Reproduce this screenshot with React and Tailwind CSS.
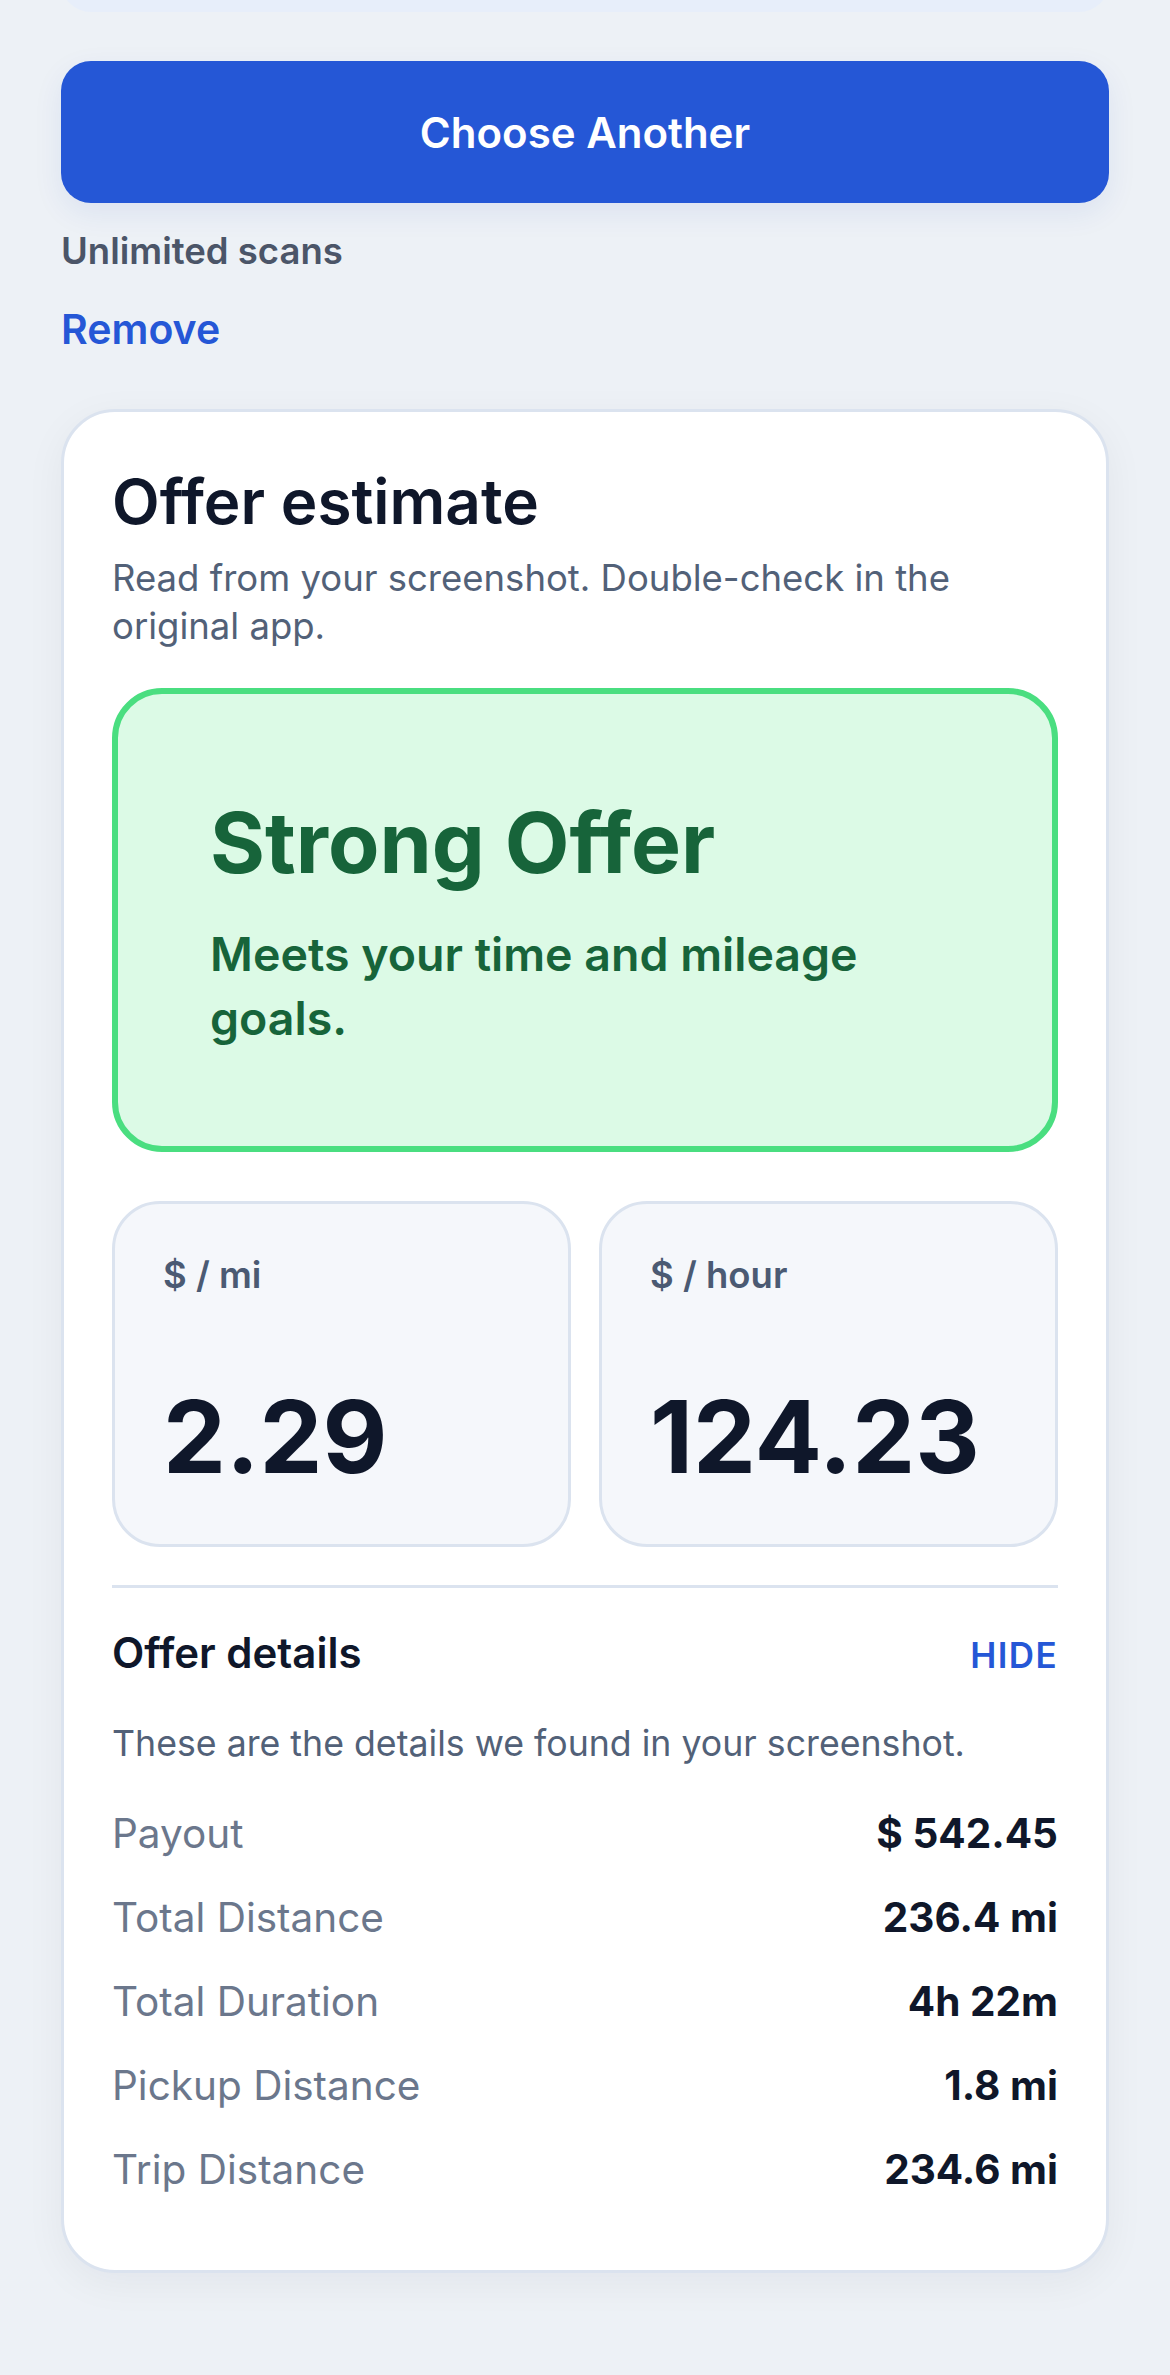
const details = [
  { label: "Payout", value: "$ 542.45" },
  { label: "Total Distance", value: "236.4 mi" },
  { label: "Total Duration", value: "4h 22m" },
  { label: "Pickup Distance", value: "1.8 mi" },
  { label: "Trip Distance", value: "234.6 mi" },
];

const MetricCard = ({ label, value }) => {
  return (
    <div className="flex flex-col h-[346px] px-[48px] pt-[48px] bg-[#f5f7fb] border-[3px] border-[#dbe3ef] rounded-[48px]">
      <span className="font-semibold text-[#4b5a73] text-[36.5px] leading-[47px]">
        {label}
      </span>
      <span className="mt-[88px] font-bold text-[#0f172a] text-[100px] leading-[100px]">
        {value}
      </span>
    </div>
  );
};

const App = () => {
  return (
    <div className="bg-[#edf1f6] px-[61px] pb-[103px] min-h-screen overflow-hidden font-['Inter',sans-serif]">
      <div className="bg-[#e7eefa] -mt-[48px] rounded-[42px] h-[60px]" />

      <button
        type="button"
        className="flex justify-center items-center bg-[#2557d6] shadow-[0_10px_30px_rgba(30,64,175,0.08)] mt-[49px] rounded-[30px] w-full h-[142px] font-semibold text-[42px] text-white"
      >
        Choose Another
      </button>

      <p className="mt-[25px] font-semibold text-[#4b5568] text-[36.5px] leading-[47px]">
        Unlimited scans
      </p>
      <p className="mt-[27px] font-semibold text-[#2557d6] text-[41px] leading-[55px]">
        Remove
      </p>

      <div className="bg-white shadow-[0_10px_40px_rgba(15,23,42,0.05)] mt-[52px] px-[48px] pt-[54px] pb-[75px] border-[3px] border-[#dbe3ef] rounded-[54px]">
        <h2 className="font-semibold text-[#0f172a] text-[62px] leading-[72px]">
          Offer estimate
        </h2>
        <p className="mt-[16px] text-[#526178] text-[36.5px] leading-[48px]">
          Read from your screenshot. Double-check in the original app.
        </p>

        <div className="bg-[#dcfae6] mt-[38px] pt-[98px] pr-[92px] pb-[96px] pl-[92px] border-[#4ade80] border-[6px] rounded-[50px]">
          <h3 className="font-bold text-[#17643a] text-[84px] leading-[101px]">
            Strong Offer
          </h3>
          <p className="mt-[29px] font-semibold text-[#17643a] text-[46.5px] leading-[64px]">
            Meets your time and mileage goals.
          </p>
        </div>

        <div className="gap-[28px] grid grid-cols-2 mt-[49px]">
          <MetricCard label="$ / mi" value="2.29" />
          <MetricCard label="$ / hour" value="124.23" />
        </div>

        <div className="bg-[#dbe3ef] mt-[38px] h-[3px]" />

        <div className="flex justify-between items-baseline mt-[39px]">
          <span className="font-semibold text-[#0f172a] text-[42px] leading-[52px]">
            Offer details
          </span>
          <button
            type="button"
            className="font-semibold text-[#2557d6] text-[35px] leading-[52px] tracking-[0.04em]"
          >
            HIDE
          </button>
        </div>
        <p className="mt-[40px] text-[#526178] text-[35.7px] leading-[44px]">
          These are the details we found in your screenshot.
        </p>

        <div className="flex flex-col gap-[34px] mt-[44px]">
          {details.map((row) => (
            <div
              key={row.label}
              className="flex justify-between items-center text-[40.5px] leading-[50px]"
            >
              <span className="text-[#6b778c]">{row.label}</span>
              <span className="font-bold text-[#0f172a]">{row.value}</span>
            </div>
          ))}
        </div>
      </div>
    </div>
  );
};

export default App;
